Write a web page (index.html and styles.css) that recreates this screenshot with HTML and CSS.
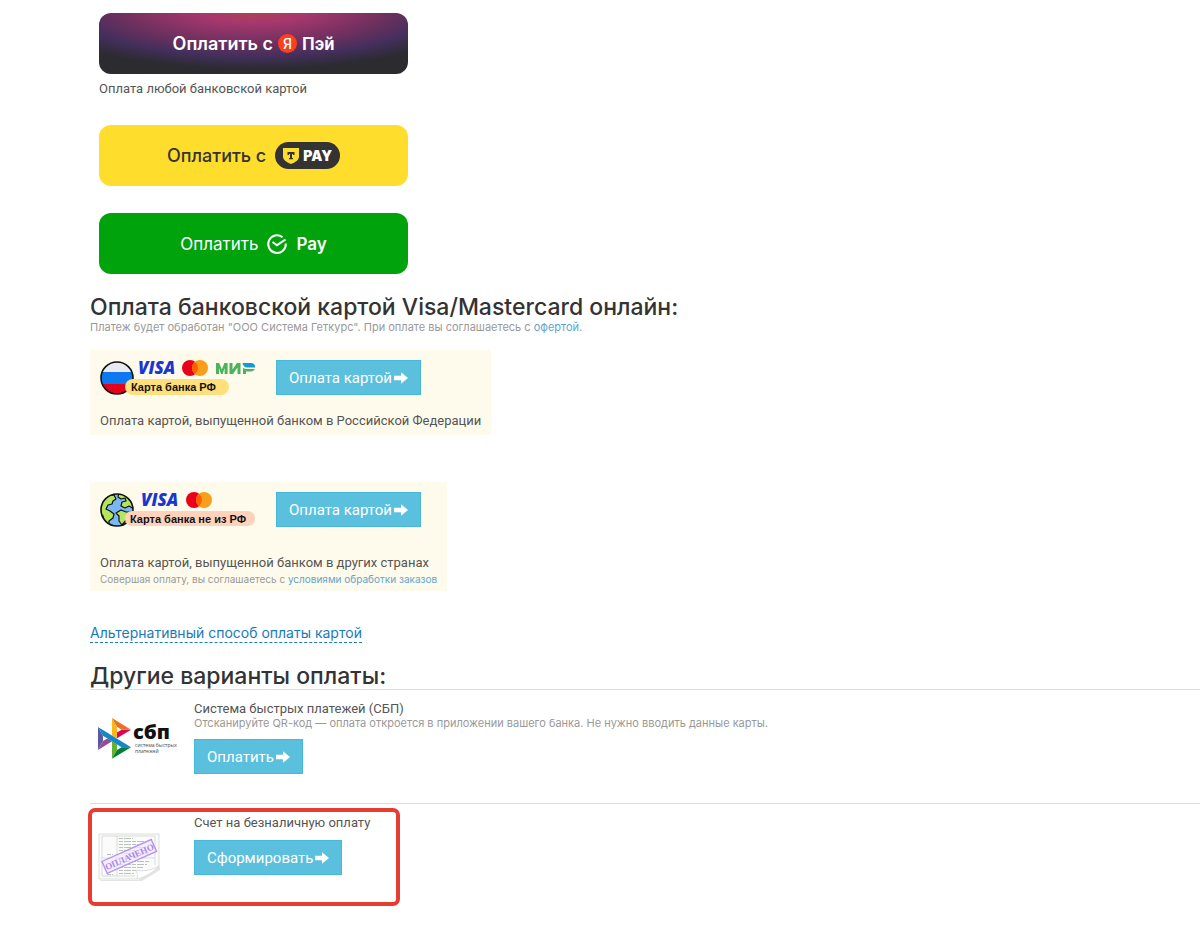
FILE: index.html
```html
<!DOCTYPE html>
<html lang="ru">
<head>
  <meta charset="UTF-8">
  <title>Оплата заказа</title>
  <link rel="stylesheet" href="styles.css">
</head>
<body>
  <svg class="defs" width="0" height="0">
    <symbol id="arrow" viewBox="0 0 14 12">
      <path d="M0 3.800h7V0.200L14 6l-7 5.800V8.200H0z" fill="#fff"/>
    </symbol>
    <symbol id="mastercard" viewBox="0 0 26 16">
      <circle cx="8" cy="8" r="8" fill="#eb001b"/>
      <circle cx="18" cy="8" r="8" fill="#f79e1b"/>
      <path d="M13 1.800a8 8 0 0 1 0 12.400a8 8 0 0 1 0-12.400z" fill="#ff5f00"/>
    </symbol>
  </svg>

  <main class="payments">
    <div class="quick">
      <button class="pay pay-yandex">
        <span>Оплатить с</span>
        <span class="ya">Я</span>
        <span class="ya-pay">Пэй</span>
      </button>
      <p class="pay-note">Оплата любой банковской картой</p>

      <button class="pay pay-t">
        <span>Оплатить с</span>
        <span class="t-badge">
          <svg width="16" height="16" viewBox="0 0 16 16">
            <path d="M0 0h16v8.500c0 3-3 5.500-8 7.500c-5-2-8-4.500-8-7.500z" fill="#ffdd2d"/>
            <path d="M4.500 4h7v3h-1.500V6H9v4h1v1.200H6V10h1V6H6v1H4.500z" fill="#333"/>
          </svg>
          PAY
        </span>
      </button>

      <button class="pay pay-sber">
        <span>Оплатить</span>
        <svg width="20" height="20" viewBox="0 0 20 20" fill="none" stroke="#fff" stroke-width="2">
          <path d="M15.500 3.200A8.800 8.800 0 1 0 18.800 9.500"/>
          <path d="M5.500 8l4.500 3.200L18.500 5.500"/>
        </svg>
        <b>Pay</b>
      </button>
    </div>

    <h2>Оплата банковской картой Visa/Mastercard онлайн:</h2>
    <p class="small">Платеж будет обработан "ООО Система Геткурс". При оплате вы соглашаетесь с <a href="#">офертой</a>.</p>

    <section class="card card-rf">
      <div class="card-top">
        <svg class="card-logo" width="156" height="36" viewBox="0 0 156 36">
          <clipPath id="flag"><circle cx="17" cy="18" r="16"/></clipPath>
          <g clip-path="url(#flag)">
            <rect width="34" height="13" fill="#e9e9f0"/>
            <rect y="12" width="34" height="12" fill="#0c78f2"/>
            <rect y="24" width="34" height="12" fill="#e5001b"/>
          </g>
          <circle cx="17" cy="18" r="16" fill="none" stroke="#111" stroke-width="1.600"/>
          <rect x="25" y="19" width="104" height="16" rx="8" fill="#fddf7b"/>
          <text x="31" y="31" class="tag">Карта банка РФ</text>
          <text x="38" y="14" class="visa">VISA</text>
          <use href="#mastercard" x="82" y="0" width="26" height="16"/>
          <g fill="#4ab35c">
            <path d="M116 14V3h3.200l2.600 6.500L124.400 3h3.200v11h-3V8l-2 6h-1.600l-2-6v6z"/>
            <path d="M129.500 14V3h3v6.500L137 3h3.500v11h-3V7.500L133 14z"/>
            <path d="M143 14V7.500c1 1 2.500 1.500 4 1.500h7.800c-.6 1.600-2 2.500-3.800 2.500h-5V14z"/>
          </g>
          <path d="M142.500 3H151c2.500 0 4.200 1.600 4.200 4.500H147c-2.400 0-4-1.800-4.500-4.500z" fill="#1599d5"/>
        </svg>
        <button class="btn">Оплата картой<svg width="14" height="12"><use href="#arrow"/></svg></button>
      </div>
      <p class="text">Оплата картой, выпущенной банком в Российской Федерации</p>
    </section>

    <section class="card card-world">
      <div class="card-top">
        <svg class="card-logo" width="156" height="36" viewBox="0 0 156 36">
          <clipPath id="globe"><circle cx="17" cy="18" r="16"/></clipPath>
          <g clip-path="url(#globe)">
            <circle cx="17" cy="18" r="16" fill="#79b8f5"/>
            <g fill="#b5e45f" stroke="#111" stroke-width="1.200" stroke-linejoin="round">
              <path d="M0 12L7 4l7-1l2 4l-3 2l-1 3l-4 1l-2 4l4 2l4 3l-1 4l-4 3l0 6l-4-3l-2-8l-4-4z"/>
              <path d="M19 0l-1 5l3 2l4-1l1 3l-4 1l-1 4l4 2l4-2l5 3V0z"/>
              <path d="M16 21l5-3l5 2l5 0l-4 7l-5 6l-3-4l0-5z"/>
            </g>
          </g>
          <circle cx="17" cy="18" r="16" fill="none" stroke="#111" stroke-width="1.600"/>
          <rect x="25" y="19" width="130" height="15" rx="7" fill="#ffd2bb"/>
          <text x="30" y="31" class="tag">Карта банка не из РФ</text>
          <text x="41" y="14" class="visa">VISA</text>
          <use href="#mastercard" x="86" y="0" width="26" height="16"/>
        </svg>
        <button class="btn">Оплата картой<svg width="14" height="12"><use href="#arrow"/></svg></button>
      </div>
      <p class="text">Оплата картой, выпущенной банком в других странах</p>
      <p class="tiny">Совершая оплату, вы соглашаетесь с <a href="#">условиями обработки заказов</a></p>
    </section>

    <a class="alt-link" href="#">Альтернативный способ оплаты картой</a>

    <h2>Другие варианты оплаты:</h2>
    <section class="option">
      <div class="option-logo">
        <svg class="sbp" width="81" height="42" viewBox="0 0 81 42">
          <g transform="scale(0.340)">
            <path d="M0 26.120l14.532 25.975v15.844L.017 93.863z" fill="#5b57a2"/>
            <path d="M55.797 42.643l13.617-8.346 27.868-.026-41.485 25.414z" fill="#d90751"/>
            <path d="M55.720 25.967l.077 34.390-14.566-8.950V0z" fill="#fab718"/>
            <path d="M97.282 34.271l-27.869.026-13.693-8.330L41.231 0z" fill="#ed6f26"/>
            <path d="M55.797 94.007V77.322l-14.566-8.780.008 51.458z" fill="#63b22f"/>
            <path d="M.017 93.863l41.333-25.320-13.896-8.526-12.922 7.922z" fill="#984995"/>
            <path d="M69.380 85.737L14.531 52.095 0 26.120l97.223 59.583z" fill="#1487c9"/>
            <path d="M41.240 120l14.556-25.993 13.583-8.270 27.843-.034z" fill="#017f36"/>
          </g>
          <text x="35" y="21" class="sbp-name">сбп</text>
          <text x="37" y="29" class="sbp-sub">система быстрых</text>
          <text x="37" y="35" class="sbp-sub">платежей</text>
        </svg>
      </div>
      <div class="option-body">
        <p class="text">Система быстрых платежей (СБП)</p>
        <p class="small">Отсканируйте QR-код — оплата откроется в приложении вашего банка. Не нужно вводить данные карты.</p>
        <button class="btn">Оплатить<svg width="14" height="12"><use href="#arrow"/></svg></button>
      </div>
    </section>

    <section class="option option-invoice">
      <div class="option-marked">
        <div class="option-logo">
          <svg class="invoice" width="64" height="52" viewBox="0 0 64 52">
            <path d="M2 48h38l22-14v4L44 49H3z" fill="#e4e4e4"/>
            <path d="M1 2h60v32L39 47H1z" fill="#fafbfa" stroke="#dcdedc"/>
            <g fill="none" stroke="#d8ddd8">
              <path d="M4 4h53v29M4 4v40h33M19 4v40M4 26h53"/>
            </g>
            <g stroke="#bac2bc" stroke-dasharray="4 1 7 1">
              <path d="M21 6.500h14M21 9.500h28M21 12.500h20M21 15.500h24M21 18.500h18M21 21.500h32M21 29.500h30M21 32.500h28M21 35.500h24M21 38.500h20M21 41.500h15M9 22.500h6M9 42.500h6"/>
            </g>
            <path d="M39 47c1-5 0-7-1-9c8 2 16 0 23-4c-5 6-13 11-22 13z" fill="#fff" stroke="#ddd"/>
            <g transform="rotate(-24 31 24)">
              <rect x="4" y="18" width="54" height="13" fill="#f2eafe" fill-opacity="0.700" stroke="#b894f2" stroke-width="1.400"/>
              <text x="31" y="28" text-anchor="middle" class="stamp">ОПЛАЧЕНО</text>
            </g>
          </svg>
        </div>
        <div class="option-body">
          <p class="text">Счет на безналичную оплату</p>
          <button class="btn">Сформировать<svg width="14" height="12"><use href="#arrow"/></svg></button>
        </div>
      </div>
    </section>
  </main>
</body>
</html>
```

FILE: styles.css
```css
* {
  box-sizing: border-box;
}
body {
  margin: 0;
  background: #fff;
  color: #555;
  font-family: Inter, "Open Sans", sans-serif;
  font-size: 13px;
  line-height: 18px;
}
p, h2 {
  margin: 0;
}
button {
  font-family: inherit;
  cursor: pointer;
}
a {
  color: #5ea5cc;
  text-decoration: none;
}
svg {
  overflow: visible;
}
.defs {
  position: absolute;
}
.payments {
  padding: 13px 0 20px 90px;
}
h2 {
  color: #333;
  font-size: 23px;
  font-weight: 550;
  line-height: 26px;
}
.text, .pay-note, .btn {
  font-family: Roboto, "Open Sans", sans-serif;
}
.text {
  font-size: 13px;
  line-height: 16px;
}
.small {
  color: #999;
  font-size: 11px;
  line-height: 14px;
}
.tiny {
  color: #999;
  font-size: 10px;
  line-height: 16px;
}

/* quick pay buttons */
.quick {
  display: flex;
  flex-direction: column;
  padding-left: 9px;
  margin-bottom: 20px;
}
.pay {
  display: flex;
  align-items: center;
  justify-content: center;
  width: 309px;
  height: 61px;
  padding: 0;
  border: 0;
  border-radius: 12px;
  font-size: 18px;
  font-weight: 500;
}
.pay-yandex {
  gap: 5px;
  color: #fff;
  font-weight: 600;
  background: radial-gradient(ellipse 230px 62px at 50% -6px, #b04545 0%, #a8386e 25%, #70305f 58%, #432f5c 80%, #2b2b30 100%) #2b2b30;
}
.ya {
  width: 19px;
  height: 19px;
  border-radius: 50%;
  background: #fc3f1d;
  font-size: 14px;
  font-weight: 500;
  line-height: 19px;
}
.ya-pay {
  font-family: Roboto, sans-serif;
}
.pay-note {
  margin: 6px 0 27px;
}
.pay-t {
  gap: 9px;
  margin-bottom: 27px;
  background: #ffdd2d;
  color: #333;
}
.t-badge {
  display: flex;
  align-items: center;
  gap: 4px;
  height: 27px;
  padding: 0 8px;
  border-radius: 14px;
  background: #333;
  color: #fff;
  font-size: 14px;
  font-weight: 900;
}
.pay-sber {
  gap: 9px;
  background: #00a30b;
  color: #fff;
  font-size: 17px;
  font-weight: 400;
}
.pay-sber b {
  font-weight: 600;
}

/* bank cards */
.card {
  width: fit-content;
  padding: 10px;
  background: #fffbec;
}
.card-top {
  display: flex;
  align-items: flex-start;
  gap: 20px;
}
.card-rf {
  margin: 16px 0 47px;
  padding-bottom: 6px;
}
.card-rf .text {
  margin-top: 17px;
}
.card-world {
  padding-bottom: 4px;
}
.card-world .text {
  margin-top: 27px;
}
.tag {
  fill: #111;
  font: bold 11px "Liberation Sans", Arial, sans-serif;
}
.visa {
  fill: #1a35d0;
  font: italic 800 17px "Open Sans", sans-serif;
}
.btn {
  display: inline-flex;
  align-items: center;
  gap: 2px;
  height: 35px;
  padding: 0 12px;
  border: 1px solid #46b8da;
  background: #5bc0de;
  color: #fff;
  font-size: 15px;
}
.alt-link {
  display: inline-block;
  margin: 33px 0 20px;
  border-bottom: 1px dashed #1b7ab8;
  color: #1b7ab8;
  font-size: 14px;
  line-height: 18px;
}

/* other options */
.option {
  display: flex;
  height: 114px;
  padding: 11px 0 0 8px;
  border-top: 1px solid #ddd;
}
.option-logo {
  flex: none;
  width: 96px;
}
.option .small {
  line-height: 12px;
}
.option .btn {
  margin-top: 10px;
}
.option-invoice {
  padding: 4px 0 0;
}
.option-marked {
  display: flex;
  width: 312px;
  height: 98px;
  margin-left: -2px;
  padding: 3px 0 0 6px;
  border: 4px solid #e63c32;
  border-radius: 7px;
}
.option-marked .btn {
  margin-top: 9px;
}
.sbp {
  margin-top: 17px;
}
.invoice {
  margin-top: 17px;
}
.sbp-name {
  fill: #111;
  font: 800 20px "Open Sans", sans-serif;
}
.sbp-sub {
  fill: #444;
  font: 5px "Open Sans", sans-serif;
}
.stamp {
  fill: #a987e8;
  font: bold 9px "Liberation Serif", serif;
}
```
